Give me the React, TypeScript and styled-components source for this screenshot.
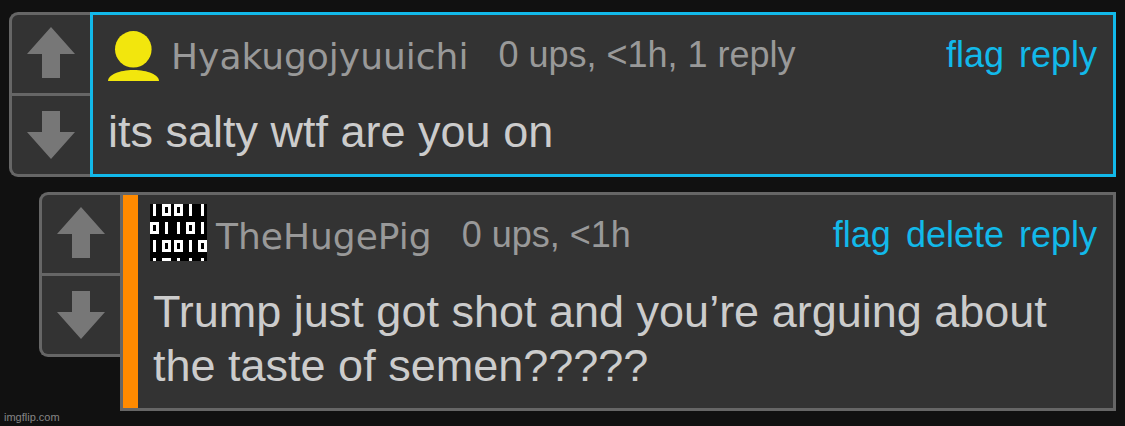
import React from "react";
import styled, { createGlobalStyle } from "styled-components";

const color = {
  page: "#111111",
  panel: "#333333",
  line: "#666666",
  arrow: "#777777",
  muted: "#999999",
  text: "#cccccc",
  link: "#12b9ea",
  own: "#ff8a00",
};

const GlobalStyle = createGlobalStyle`
  *, *::before, *::after { box-sizing: border-box; }
  body {
    margin: 0;
    background: ${color.page};
    font-family: "Liberation Sans", Arial, sans-serif;
  }
`;

const Page = styled.main`
  padding: 12px 9px 0;
`;

const Thread = styled.div`
  display: flex;
  flex-direction: column;
  gap: 15px;
`;

const Comment = styled.article<{ $depth: number }>`
  display: flex;
  align-items: flex-start;
  margin-left: ${(p) => p.$depth * 30}px;
`;

const Votes = styled.div`
  flex: none;
  width: 81px;
  border: 3px solid ${color.line};
  border-right: 0;
  border-radius: 9px 0 0 9px;
  background: ${color.panel};
`;

const VoteButton = styled.button`
  display: flex;
  align-items: center;
  justify-content: center;
  width: 100%;
  height: 78px;
  padding: 0;
  border: 0;
  background: none;
  cursor: pointer;

  & + & {
    height: 81px;
    border-top: 3px solid ${color.line};
  }
`;

const Card = styled.div<{ $active?: boolean; $own?: boolean }>`
  flex: 1;
  min-width: 0;
  display: flex;
  border: 3px solid ${(p) => (p.$active ? color.link : color.line)};
  background: ${color.panel};

  &::before {
    content: "";
    flex: none;
    width: ${(p) => (p.$own ? 15 : 0)}px;
    background: ${color.own};
  }
`;

const CardContent = styled.div`
  flex: 1;
  min-width: 0;
  padding: 9px 16px 15px 12px;
`;

const Header = styled.header`
  display: flex;
  align-items: flex-start;
  min-height: 81px;
`;

const Avatar = styled.svg`
  flex: none;
  width: 57px;
  height: 57px;
  margin-right: 9px;
`;

const UserName = styled.a`
  color: ${color.muted};
  font-family: "DejaVu Sans", Verdana, sans-serif;
  font-size: 36px;
  line-height: 66px;
  text-decoration: none;
`;

const Meta = styled.span`
  flex: 1;
  margin-left: 30px;
  color: ${color.muted};
  font-size: 36px;
  line-height: 62px;
  white-space: nowrap;
`;

const Actions = styled.nav`
  display: flex;
  gap: 15px;
`;

const Action = styled.a`
  color: ${color.link};
  font-size: 36px;
  line-height: 62px;
  text-decoration: none;
`;

const Body = styled.p`
  margin: 0;
  padding-left: 3px;
  color: ${color.text};
  font-size: 45px;
  line-height: 54px;
`;

const Watermark = styled.footer`
  margin-left: -5px;
  color: #858585;
  font-size: 11px;
  line-height: 13px;
`;

const PersonAvatar = () => (
  <Avatar viewBox="0 0 57 57" aria-hidden="true">
    <g fill="#f2e60d">
      <circle cx="28.3" cy="25.3" r="18.3" />
      <path d="M3 57C3 51 14 46 28.5 46S54 51 54 57Z" />
    </g>
  </Avatar>
);

const binaryRows = [
  { y: 0, ones: [3, 39, 51], zeros: [12, 24] },
  { y: 18, ones: [15, 27, 51], zeros: [0, 36] },
  { y: 36, ones: [3, 39], zeros: [12, 24, 48] },
  { y: 54, ones: [3, 27, 39, 51], zeros: [12] },
];

const BinaryAvatar = () => (
  <Avatar viewBox="0 0 57 57" aria-hidden="true">
    <rect width="57" height="57" fill="#000" />
    {binaryRows.map((row) => (
      <g key={row.y}>
        {row.ones.map((x) => (
          <rect key={x} x={x} y={row.y} width="3" height="12" fill="#fff" />
        ))}
        {row.zeros.map((x) => (
          <rect
            key={x}
            x={x + 1.5}
            y={row.y + 1.5}
            width="6"
            height="9"
            fill="none"
            stroke="#fff"
            strokeWidth="3"
          />
        ))}
      </g>
    ))}
  </Avatar>
);

const VoteColumn = () => (
  <Votes>
    <VoteButton aria-label="Upvote">
      <svg width="48" height="54" viewBox="0 0 48 54">
        <path d="M24 0L48 27H33V51H15V27H0Z" fill={color.arrow} />
      </svg>
    </VoteButton>
    <VoteButton aria-label="Downvote">
      <svg width="48" height="48" viewBox="0 0 48 48">
        <path d="M15 0H33V21H48L24 48L0 21H15Z" fill={color.arrow} />
      </svg>
    </VoteButton>
  </Votes>
);

type CommentData = {
  user: string;
  avatar: React.ReactNode;
  meta: string;
  actions: string[];
  text: string;
  depth: number;
  active?: boolean;
  own?: boolean;
};

const comments: CommentData[] = [
  {
    user: "Hyakugojyuuichi",
    avatar: <PersonAvatar />,
    meta: "0 ups, <1h, 1 reply",
    actions: ["flag", "reply"],
    text: "its salty wtf are you on",
    depth: 0,
    active: true,
  },
  {
    user: "TheHugePig",
    avatar: <BinaryAvatar />,
    meta: "0 ups, <1h",
    actions: ["flag", "delete", "reply"],
    text: "Trump just got shot and you’re arguing about the taste of semen?????",
    depth: 1,
    own: true,
  },
];

export default function App() {
  return (
    <>
      <GlobalStyle />
      <Page>
        <Thread>
          {comments.map((c) => (
            <Comment key={c.user} $depth={c.depth}>
              <VoteColumn />
              <Card $active={c.active} $own={c.own}>
                <CardContent>
                  <Header>
                    {c.avatar}
                    <UserName href="#">{c.user}</UserName>
                    <Meta>{c.meta}</Meta>
                    <Actions>
                      {c.actions.map((a) => (
                        <Action key={a} href="#">
                          {a}
                        </Action>
                      ))}
                    </Actions>
                  </Header>
                  <Body>{c.text}</Body>
                </CardContent>
              </Card>
            </Comment>
          ))}
        </Thread>
        <Watermark>imgflip.com</Watermark>
      </Page>
    </>
  );
}
